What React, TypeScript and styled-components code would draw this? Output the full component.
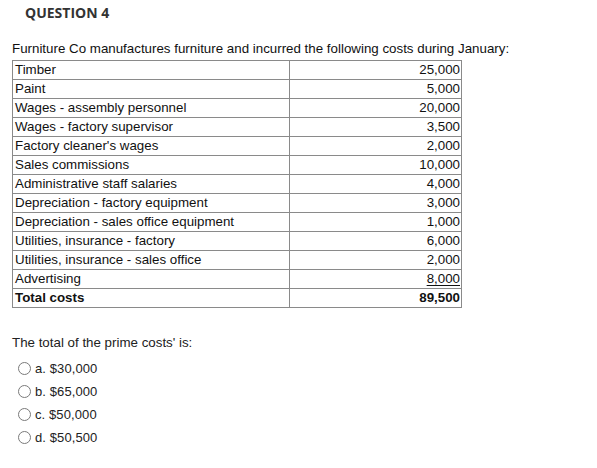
import styled, { createGlobalStyle } from "styled-components"

const GlobalStyle = createGlobalStyle`
    body {
        margin: 0;
        background: #ffffff;
        font-family: "Liberation Sans", Arial, sans-serif;
        color: #111;
    }
`

const PageStyled = styled.div`
    width: 597px;
    height: 468px;
    padding: 0 12px;
    box-sizing: border-box;
`

const TitleStyled = styled.h3`
    margin: 0;
    padding: 3px 0 0 13px;
    height: 20px;
    line-height: 20px;
    font-family: "Open Sans", sans-serif;
    font-weight: 700;
    font-size: 14px;
    color: #333;
`

const IntroStyled = styled.p`
    margin: 17px 0 3px;
    font-size: 13.33px;
    line-height: 17px;
    color: #111;
`

const CostTable = styled.table`
    width: 450px;
    border-collapse: collapse;
    font-size: 13.33px;
`

const Cell = styled.td<{ $num?: boolean; $bold?: boolean }>`
    border: 1px solid #8a8a8a;
    height: 18px;
    line-height: 18px;
    padding: 0 1px 0 2px;
    text-align: ${({ $num }) => ($num ? "right" : "left")};
    font-weight: ${({ $bold }) => ($bold ? 700 : 400)};
    color: #111;
    white-space: nowrap;

    &:first-child {
        width: 273px;
    }

    u {
        text-decoration-thickness: 1px;
        text-underline-offset: 2px;
    }
`

const PromptStyled = styled.p`
    margin: 26px 0 6px;
    font-size: 13.33px;
    line-height: 17px;
    color: #222;
`

const OptionList = styled.div`
    display: flex;
    flex-direction: column;
    padding-left: 6px;
`

const OptionRow = styled.label`
    display: flex;
    align-items: center;
    height: 23px;
    gap: 4px;
    font-size: 13px;
    letter-spacing: 0.1px;
    color: #222;
`

const RadioCircle = styled.span`
    width: 11px;
    height: 11px;
    border: 1px solid #7a7a7a;
    border-radius: 50%;
    background: #fff;
    flex: none;
`

const rows: [string, string][] = [
    ["Timber", "25,000"],
    ["Paint", "5,000"],
    ["Wages - assembly personnel", "20,000"],
    ["Wages - factory supervisor", "3,500"],
    ["Factory cleaner's wages", "2,000"],
    ["Sales commissions", "10,000"],
    ["Administrative staff salaries", "4,000"],
    ["Depreciation - factory equipment", "3,000"],
    ["Depreciation - sales office equipment", "1,000"],
    ["Utilities, insurance - factory", "6,000"],
    ["Utilities, insurance - sales office", "2,000"],
]

const options = ["a. $30,000", "b. $65,000", "c. $50,000", "d. $50,500"]

export default function App() {
    return (
        <PageStyled>
            <GlobalStyle />
            <TitleStyled>QUESTION 4</TitleStyled>
            <IntroStyled>
                Furniture Co manufactures furniture and incurred the following costs during January:
            </IntroStyled>
            <CostTable>
                <tbody>
                    {rows.map(([label, value]) => (
                        <tr key={label}>
                            <Cell>{label}</Cell>
                            <Cell $num>{value}</Cell>
                        </tr>
                    ))}
                    <tr>
                        <Cell>Advertising</Cell>
                        <Cell $num><u>8,000</u></Cell>
                    </tr>
                    <tr>
                        <Cell $bold>Total costs</Cell>
                        <Cell $num $bold>89,500</Cell>
                    </tr>
                </tbody>
            </CostTable>
            <PromptStyled>The total of the prime costs' is:</PromptStyled>
            <OptionList>
                {options.map((o) => (
                    <OptionRow key={o}>
                        <RadioCircle />
                        {o}
                    </OptionRow>
                ))}
            </OptionList>
        </PageStyled>
    )
}
